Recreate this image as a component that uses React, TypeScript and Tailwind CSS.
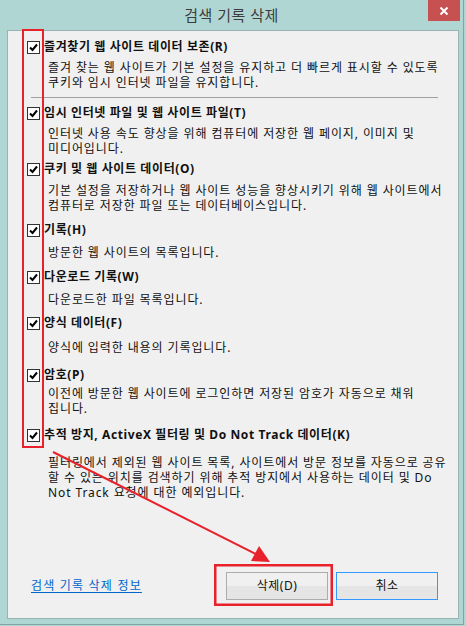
const items = [
  {
    label: '즐겨찾기 웹 사이트 데이터 보존(R)',
    lines: ['즐겨 찾는 웹 사이트가 기본 설정을 유지하고 더 빠르게 표시할 수 있도록', '쿠키와 임시 인터넷 파일을 유지합니다.'],
    mt: 'mt-0',
    dmt: 'mt-[5px]',
  },
  {
    label: '임시 인터넷 파일 및 웹 사이트 파일(T)',
    lines: ['인터넷 사용 속도 향상을 위해 컴퓨터에 저장한 웹 페이지, 이미지 및', '미디어입니다.'],
    mt: 'mt-[7px]',
    dmt: 'mt-[5px]',
  },
  {
    label: '쿠키 및 웹 사이트 데이터(O)',
    lines: ['기본 설정을 저장하거나 웹 사이트 성능을 향상시키기 위해 웹 사이트에서', '컴퓨터로 저장한 파일 또는 데이터베이스입니다.'],
    mt: 'mt-[5px]',
    dmt: 'mt-[6px]',
  },
  { label: '기록(H)', lines: ['방문한 웹 사이트의 목록입니다.'], mt: 'mt-[9px]', dmt: 'mt-[7px]' },
  { label: '다운로드 기록(W)', lines: ['다운로드한 파일 목록입니다.'], mt: 'mt-[9px]', dmt: 'mt-[7px]' },
  { label: '양식 데이터(F)', lines: ['양식에 입력한 내용의 기록입니다.'], mt: 'mt-[8px]', dmt: 'mt-[9px]' },
  {
    label: '암호(P)',
    lines: ['이전에 방문한 웹 사이트에 로그인하면 저장된 암호가 자동으로 채워', '집니다.'],
    mt: 'mt-[12px]',
    dmt: 'mt-[3px]',
  },
  {
    label: '추적 방지, ActiveX 필터링 및 Do Not Track 데이터(K)',
    lines: [
      '필터링에서 제외된 웹 사이트 목록, 사이트에서 방문 정보를 자동으로 공유',
      '할 수 있는 위치를 검색하기 위해 추적 방지에서 사용하는 데이터 및 Do',
      'Not Track 요청에 대한 예외입니다.',
    ],
    mt: 'mt-[11px]',
    dmt: 'mt-[12px]',
  },
];

function CheckBox() {
  return (
    <div className="w-[13px] h-[13px] shrink-0 border border-[#333333] bg-white flex items-center justify-center">
      <svg width="11" height="11" viewBox="0 0 11 11">
        <path d="M2 5.5 L4.5 8 L9 2.5" fill="none" stroke="#000" strokeWidth="2" />
      </svg>
    </div>
  );
}

export default function App() {
  return (
    <div className="relative w-[466px] h-[626px] bg-[#b0d6d4] overflow-hidden font-['Noto_Sans','Noto_Sans_CJK_KR',sans-serif] text-[#111]">
      <div className="w-[464px] h-[625px] border-r border-b border-[#80a5a3] flex flex-col">
        {/* title bar */}
        <div className="relative h-[30px] shrink-0 flex items-center justify-center">
          <span className="text-[15px] text-[#3c3c3c] leading-none pt-[1px] tracking-[0.5px]">검색 기록 삭제</span>
          <div className="absolute right-[3px] top-0 w-[32px] h-[21px] bg-[#c75050] flex items-center justify-center">
            <svg width="10" height="10" viewBox="0 0 10 10">
              <path d="M1.5 1.5 L8.5 8.5 M8.5 1.5 L1.5 8.5" stroke="#fff" strokeWidth="2" />
            </svg>
          </div>
        </div>

        {/* panel */}
        <div className="ml-[7px] w-[452px] h-[589px] border border-[#98b4b2] bg-[#f0f0f0] flex flex-col pt-[8px] pl-[19px]">
          {items.map((item, i) => (
            <div key={i} className={item.mt}>
              <div className="flex items-center h-[16px]">
                <CheckBox />
                <span className="ml-[4px] text-[12px] font-bold leading-[16px] tracking-[0.6px] whitespace-nowrap">{item.label}</span>
              </div>
              <div className={`${item.dmt} ml-[21px] text-[12px] leading-[15px] tracking-[0.9px] whitespace-nowrap`}>
                {item.lines.map((line, j) => (
                  <div key={j}>{line}</div>
                ))}
              </div>
              {i === 0 && <div className="mt-[7px] ml-[4px] w-[407px] h-px bg-[#a0a0a0]" />}
            </div>
          ))}

          <div className="mt-auto pb-[18px] pr-[20px] flex items-center">
            <a className="ml-[4px] text-[12px] text-[#0066cc] underline underline-offset-2 tracking-[1.2px] whitespace-nowrap">검색 기록 삭제 정보</a>
            <div className="ml-auto flex gap-[8px]">
              <button className="w-[102px] h-[28px] border border-[#acacac] bg-gradient-to-b from-[#f0f0f0] from-50% to-[#e5e5e5] to-50% text-[12px] text-[#111] tracking-[0.5px]">
                삭제(D)
              </button>
              <button className="w-[102px] h-[28px] border border-[#3399ff] bg-gradient-to-b from-[#f0f0f0] from-50% to-[#e5e5e5] to-50% text-[12px] text-[#111] tracking-[0.5px]">
                취소
              </button>
            </div>
          </div>
        </div>
      </div>

      {/* annotations */}
      <svg className="absolute inset-0 pointer-events-none" width="466" height="626" viewBox="0 0 466 626">
        <rect x="23" y="30" width="20" height="417" fill="none" stroke="#e8212b" strokeWidth="2" />
        <rect x="215.25" y="565.25" width="116.5" height="39.5" fill="none" stroke="#e8212b" strokeWidth="2.5" />
        <line x1="53" y1="452" x2="256" y2="554" stroke="#e8212b" strokeWidth="2" />
        <polygon points="251,561 270,562 259,546" fill="#e8212b" />
      </svg>
    </div>
  );
}
